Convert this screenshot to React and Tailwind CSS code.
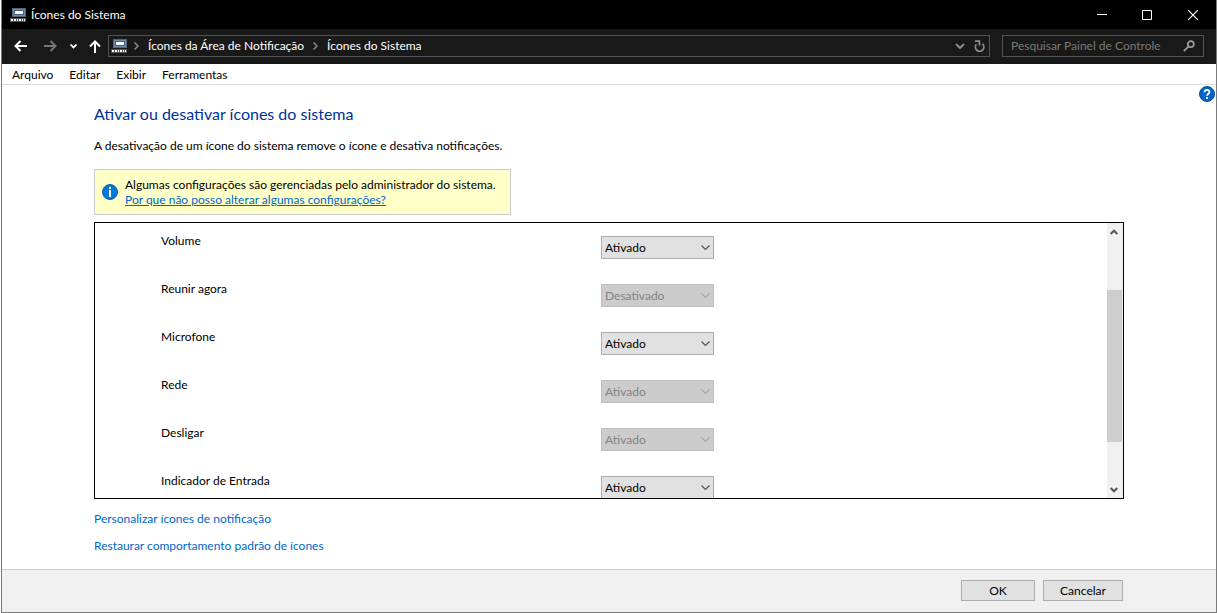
import React, { useState } from "react";

const ITENS = [
  { id: "volume", nome: "Volume", valor: "Ativado" },
  { id: "reunir", nome: "Reunir agora", valor: "Desativado", bloqueado: true },
  { id: "microfone", nome: "Microfone", valor: "Ativado" },
  { id: "rede", nome: "Rede", valor: "Ativado", bloqueado: true },
  { id: "desligar", nome: "Desligar", valor: "Ativado", bloqueado: true },
  { id: "entrada", nome: "Indicador de Entrada", valor: "Ativado" },
];

const MENUS = ["Arquivo", "Editar", "Exibir", "Ferramentas"];

function IconeSistema() {
  return (
    <svg
      width="16"
      height="14"
      viewBox="0 0 16 14"
      shapeRendering="crispEdges"
      className="shrink-0"
      aria-hidden="true"
    >
      <rect x="2" y="0" width="14" height="9" fill="#4f6580" />
      <rect x="3" y="1" width="12" height="7" fill="#6f8bad" />
      <rect x="4" y="2" width="10" height="5" fill="#4a6079" />
      <rect x="5" y="3" width="8" height="3" fill="#ffffff" />
      <rect x="0" y="10" width="16" height="4" fill="#555555" />
      <path
        d="M1 11h2v2H1zM4 11h2v2H4zM7 11h1v2H7zM9 11h2v2H9zM12 11h1v2h-1zM14 11h1v2h-1z"
        fill="#ffffff"
      />
    </svg>
  );
}

function Seta({ d, className, w = 8, h = 6, traco = 1.5 }) {
  return (
    <svg
      width={w}
      height={h}
      viewBox={`0 0 ${w} ${h}`}
      fill="none"
      stroke="currentColor"
      strokeWidth={traco}
      className={className}
      aria-hidden="true"
    >
      <path d={d} />
    </svg>
  );
}

function BarraTitulo() {
  return (
    <header className="flex h-[29px] shrink-0 items-center bg-black pl-2 text-white">
      <IconeSistema />
      <span className="ml-[5px] flex-1">Ícones do Sistema</span>
      <button type="button" title="Minimizar" className="flex h-full w-[45px] items-center justify-center">
        <Seta w={10} h={10} traco={1} d="M0 4.5h10" />
      </button>
      <button type="button" title="Maximizar" className="flex h-full w-[45px] items-center justify-center">
        <Seta w={10} h={10} traco={1} d="M.5.5h9v9h-9z" />
      </button>
      <button type="button" title="Fechar" className="flex h-full w-[47px] items-center justify-center">
        <Seta w={10} h={10} traco={1.2} d="M0 0l10 10M10 0L0 10" />
      </button>
    </header>
  );
}

function BarraNavegacao() {
  return (
    <nav className="flex h-[35px] shrink-0 items-center bg-[#191919] pb-px pr-3 text-white">
      <button type="button" title="Voltar" className="ml-3 flex w-[13px] justify-center">
        <Seta w={13} h={12} traco={2} d="M6.5 1L1.5 6l5 5M1.5 6H13" />
      </button>
      <button type="button" title="Avançar" className="ml-[17px] flex w-[13px] justify-center text-[#767676]">
        <Seta w={13} h={12} traco={2} d="M6.5 1l5 5-5 5M11.5 6H0" />
      </button>
      <button type="button" title="Locais recentes" className="ml-[13px] flex w-[7px] justify-center">
        <Seta w={7} h={5} traco={1.8} d="M.5.5l3 3 3-3" />
      </button>
      <button type="button" title="Acima" className="ml-3 flex w-3 justify-center">
        <Seta w={12} h={13} traco={2} d="M1 6.5l5-5 5 5M6 1.5V13" />
      </button>

      <div className="ml-[7px] flex h-[22px] flex-1 items-center border border-[#535353] pl-[2px]">
        <IconeSistema />
        <Seta w={5} h={8} traco={1.5} d="M.5.5L4 4 .5 7.5" className="ml-[7px] text-[#8a8a8a]" />
        <a href="#area" className="ml-[9px]">Ícones da Área de Notificação</a>
        <Seta w={5} h={8} traco={1.5} d="M.5.5L4 4 .5 7.5" className="ml-[9px] text-[#8a8a8a]" />
        <a href="#sistema" className="ml-[9px] flex-1">Ícones do Sistema</a>
        <button type="button" title="Locais anteriores" className="text-[#8a8a8a]">
          <Seta w={10} h={7} traco={2} d="M1 1l4 4 4-4" />
        </button>
        <button type="button" title="Atualizar" className="ml-[9px] mr-1 text-[#8a8a8a]">
          <Seta w={11} h={12} traco={1.8} d="M2.4 4.4A4.2 4.2 0 1 0 8.4 3.9M1 1.2h4.4v4.4" />
        </button>
      </div>

      <div className="ml-3 flex h-[22px] w-[202px] items-center border border-[#535353] pl-2 pr-2">
        <input
          type="text"
          aria-label="Pesquisar Painel de Controle"
          placeholder="Pesquisar Painel de Controle"
          className="min-w-0 flex-1 bg-transparent outline-none placeholder:text-[#7a7a7a]"
        />
        <Seta
          w={12}
          h={12}
          traco={1.7}
          d="M7.8 1.2a3 3 0 1 1 0 6 3 3 0 0 1 0-6M5.6 6.4L.8 11.2"
          className="shrink-0 text-[#a0a0a0]"
        />
      </div>
    </nav>
  );
}

function LinhaIcone({ item }) {
  const [valor, setValor] = useState(item.valor);

  return (
    <li className="flex h-12 items-start pl-[66px]">
      <label htmlFor={item.id} className="w-[440px] pt-[10px]">
        {item.nome}
      </label>
      <div className="relative mt-[13px] w-[113px]">
        <select
          id={item.id}
          value={valor}
          disabled={item.bloqueado}
          onChange={(e) => setValor(e.target.value)}
          className="block h-[23px] w-full appearance-none rounded-none border border-[#adadad] bg-[#e1e1e1] pl-[3px] text-black disabled:border-[#bfbfbf] disabled:bg-[#cccccc] disabled:text-[#838383] disabled:opacity-100"
        >
          <option>Ativado</option>
          <option>Desativado</option>
        </select>
        <Seta
          w={9}
          h={6}
          traco={1.2}
          d="M.5.5l4 4 4-4"
          className={
            item.bloqueado
              ? "pointer-events-none absolute right-1 top-[9px] text-[#a8a8a8]"
              : "pointer-events-none absolute right-1 top-[9px] text-[#555555]"
          }
        />
      </div>
    </li>
  );
}

function BarraRolagem() {
  return (
    <div className="flex w-4 shrink-0 flex-col bg-[#f0f0f0] text-[#555555]">
      <button type="button" title="Rolar para cima" className="flex h-[17px] items-center justify-center pr-[2px]">
        <Seta w={8} h={6} traco={2} d="M.7 5L4 1.7 7.3 5" />
      </button>
      <div className="flex-[50]" />
      <div className="mr-px flex-[152] bg-[#cdcdcd]" />
      <div className="flex-[39]" />
      <button type="button" title="Rolar para baixo" className="flex h-[17px] items-center justify-center pr-[2px]">
        <Seta w={8} h={6} traco={2} d="M.7 1L4 4.3 7.3 1" />
      </button>
    </div>
  );
}

export default function App() {
  return (
    <div className="h-screen bg-white pl-px font-[Lato,sans-serif] text-[12px] leading-4 text-black">
      <div className="flex h-full flex-col border-x border-b border-[#7a7a7a]">
        <BarraTitulo />
        <BarraNavegacao />

        <div className="flex h-[21px] shrink-0 items-center gap-4 border-b border-[#dadada] pl-[10px] pt-px">
          {MENUS.map((m) => (
            <button key={m} type="button">
              {m}
            </button>
          ))}
        </div>

        <main className="relative flex min-h-0 flex-1 flex-col px-[92px] pb-[15px] pt-[17px]">
          <button type="button" title="Ajuda" className="absolute right-px top-px">
            <svg width="16" height="16" viewBox="0 0 16 16" aria-hidden="true">
              <circle cx="8" cy="8" r="7.5" fill="#0066cc" stroke="#0a4f94" />
              <path
                d="M5.6 6.2C5.6 3.2 10.5 3.2 10.5 6c0 1.8-2.4 1.8-2.4 3.7"
                fill="none"
                stroke="#ffffff"
                strokeWidth="1.8"
              />
              <rect x="7" y="11" width="2" height="2" fill="#ffffff" />
            </svg>
          </button>

          <h1 className="text-[16px] leading-6 text-[#003399]">
            Ativar ou desativar ícones do sistema
          </h1>
          <p className="mt-3">
            A desativação de um ícone do sistema remove o ícone e desativa notificações.
          </p>

          {/* Aviso do administrador */}
          <div className="mt-[15px] flex h-[46px] w-[417px] shrink-0 items-center gap-[7px] border border-[#c8c8c8] bg-[#ffffc8] pl-[7px] leading-[15px]">
            <svg width="16" height="16" viewBox="0 0 16 16" className="shrink-0" aria-hidden="true">
              <circle cx="8" cy="8" r="7.5" fill="#0078d7" stroke="#0a62b0" />
              <path d="M7 3h2v2H7zM7 6h2v7H7z" fill="#ffffff" />
            </svg>
            <div className="whitespace-nowrap">
              <p>Algumas configurações são gerenciadas pelo administrador do sistema.</p>
              <a href="#ajuda" className="block text-[#0066cc] underline">
                Por que não posso alterar algumas configurações?
              </a>
            </div>
          </div>

          {/* Lista de ícones */}
          <div className="mt-[7px] flex min-h-0 flex-1 border border-black">
            <ul className="min-w-0 flex-1 overflow-hidden">
              {ITENS.map((item) => (
                <LinhaIcone key={item.id} item={item} />
              ))}
            </ul>
            <BarraRolagem />
          </div>

          <div className="mt-3 flex flex-col items-start gap-[11px] text-[#0066cc]">
            <a href="#personalizar">Personalizar ícones de notificação</a>
            <a href="#restaurar">Restaurar comportamento padrão de ícones</a>
          </div>
        </main>

        <footer className="flex h-[43px] shrink-0 items-center justify-end gap-2 border-t border-[#cccccc] bg-[#f0f0f0] px-[93px] pb-px">
          <button type="button" className="h-[21px] w-[74px] border border-[#adadad] bg-[#e1e1e1]">
            OK
          </button>
          <button type="button" className="h-[21px] w-[80px] border border-[#adadad] bg-[#e1e1e1]">
            Cancelar
          </button>
        </footer>
      </div>
    </div>
  );
}
